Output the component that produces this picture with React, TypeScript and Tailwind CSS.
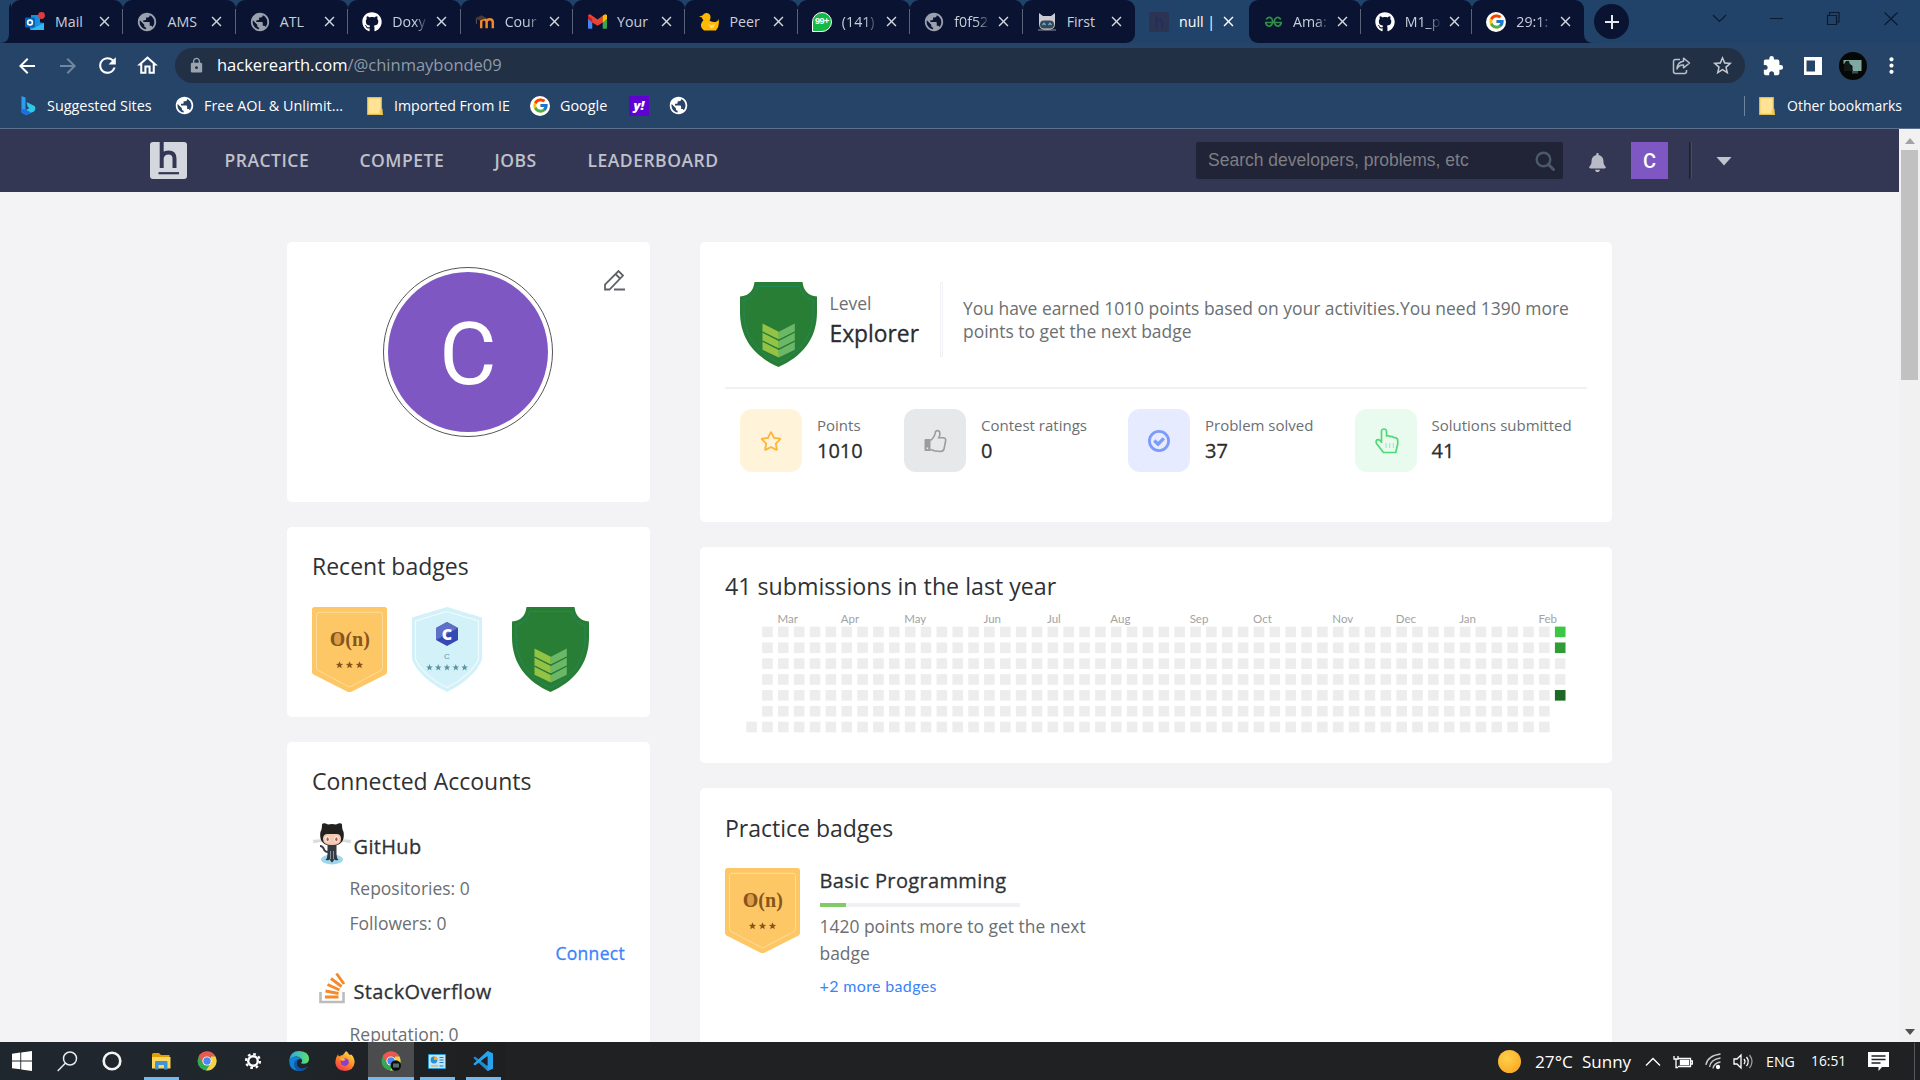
import type { ReactNode } from "react";
import { FcGoogle } from "react-icons/fc";
import { FaGithub, FaRegStar, FaBell } from "react-icons/fa";
import { MdPublic, MdClose, MdArrowBack, MdArrowForward, MdRefresh, MdOutlineHome, MdLock, MdStarBorder, MdExtension, MdMoreVert, MdAdd } from "react-icons/md";

/* ---------- favicons ---------- */

function Outlook() {
  return (
    <svg width="20" height="20" viewBox="0 0 20 20">
      <path d="M6 3h9v9H6z" fill="#1490df" />
      <path d="M5 9l14 2v7H5z" fill="#1a8fe0" />
      <path d="M5 18l14-7v7z" fill="#35b8f1" />
      <rect x="0" y="5.500" width="10" height="10" rx="1" fill="#0364b8" />
      <circle cx="5" cy="10.500" r="2.400" fill="none" stroke="#fff" strokeWidth="1.600" />
      <circle cx="16.500" cy="3.500" r="3.400" fill="#e03a3a" />
    </svg>
  );
}

function Moodle() {
  return (
    <svg width="21" height="20" viewBox="0 0 21 20">
      <path d="M6.500 16.500V10q0-3 2.800-3t2.900 3v6.500M12.200 16.500V10q0-3 3.200-3t3.300 3v6.500" fill="none" stroke="#f0872a" strokeWidth="2.600" />
      <path d="M0 6l7-3 5 3-7 2.500z" fill="#4a3a33" />
      <path d="M1.500 7v5" stroke="#6b5a4a" strokeWidth="1" />
    </svg>
  );
}

function Gmail() {
  return (
    <svg width="19" height="19" viewBox="0 0 20 20">
      <path d="M0 5v11.500q0 1 1 1h3.500V8z" fill="#4285f4" />
      <path d="M20 5v11.500q0 1-1 1h-3.500V8z" fill="#34a853" />
      <path d="M15.500 4.500L20 3.500V7l-4.500 4z" fill="#fbbc04" />
      <path d="M0 7V4q.5-2.500 3-1.200L10 8l5.500-4V11L10 14.500 4.500 11z" fill="#ea4335" />
      <path d="M15.500 4l1.500-1.200q2.500-1.300 3 1.200v3l-4.500 3.500z" fill="#fbbc04" />
      <path d="M0 7V4l4.500 3v4z" fill="#c5221f" />
    </svg>
  );
}

function Duck() {
  return (
    <svg width="20" height="20" viewBox="0 0 20 20">
      <path d="M0 4.500L3.500 3.500Q5 .5 8 1q3.500.8 3.500 4 0 2-1 3.500 3 2 6 1.500 2.500-.5 3-3 1.500 7-2.500 11.500H5Q.5 15 2.500 11q1-2 2-3Q3 7 3 5.500z" fill="#ffb900" />
      <path d="M9 12q3 2 7 0-1 4-4 4.500z" fill="#ffd978" />
    </svg>
  );
}

function WhatsApp() {
  return (
    <span className="grid h-5 w-5 place-items-center rounded-full rounded-bl-[3px] border border-white bg-[#13b944] font-['Liberation_Sans'] text-[9px] font-bold tracking-[-0.5px] text-white">99+</span>
  );
}

function CatBot() {
  return (
    <svg width="20" height="20" viewBox="0 0 20 20">
      <path d="M2 1l4 3h8l4-3v11q0 6-8 6t-8-6z" fill="#c8ccd2" />
      <rect x="3" y="8.500" width="14" height="8" rx="4" fill="#3b4653" />
      <path d="M5.500 13l1.500-1.800L8.500 13M11.500 13l1.500-1.800 1.500 1.800" fill="none" stroke="#59b7ea" strokeWidth="1.200" />
      <path d="M1 18h18" stroke="#8e949c" strokeWidth="1" />
    </svg>
  );
}

function GeeksIcon() {
  return (
    <svg width="19" height="12" viewBox="0 0 19 12">
      <path d="M1 6.500h17M2.200 3.500Q5-.5 8 3q1.500 3.500-.5 6Q4 12 1.500 7M16.800 3.500Q14-.5 11 3q-1.500 3.500.5 6 3.500 3 6-2" fill="none" stroke="#2f8d46" strokeWidth="1.700" />
    </svg>
  );
}

function HackerTabIcon() {
  return <span className="grid h-5 w-5 place-items-center rounded-[2px] bg-[#2c3454] font-['Roboto'] text-[17px] leading-5 text-[#1d2f5c]">h</span>;
}

const globe = <MdPublic size={22} color="#9aa1ad" className="-m-px" />;

type TabData = { icon: ReactNode; title: string; fade?: boolean };
const leftTabs: TabData[] = [
  { icon: <Outlook />, title: "Mail" },
  { icon: globe, title: "AMS" },
  { icon: globe, title: "ATL" },
  { icon: <FaGithub size={20} color="#fff" />, title: "Doxy", fade: true },
  { icon: <Moodle />, title: "Cour", fade: true },
  { icon: <Gmail />, title: "Your" },
  { icon: <Duck />, title: "Peer" },
  { icon: <WhatsApp />, title: "(141)", fade: true },
  { icon: globe, title: "f0f52", fade: true },
  { icon: <CatBot />, title: "First" },
];
const rightTabs: TabData[] = [
  { icon: <GeeksIcon />, title: "Ama:", fade: true },
  { icon: <FaGithub size={20} color="#fff" />, title: "M1_p", fade: true },
  { icon: <FcGoogle size={17} />, title: "29:1:", fade: true },
];

function Tab({ tab, last, active }: { tab: TabData; last?: boolean; active?: boolean }) {
  const isGoogle = tab.title === "29:1:";
  return (
    <div className={`flex h-[43px] min-w-0 flex-1 items-center rounded-t-[9px] pl-[14px] ${active ? "text-white" : "bg-[#0a1432] text-[#c9cedb]"}`}>
      <div className={`flex h-5 w-5 shrink-0 items-center justify-center ${isGoogle ? "rounded-full bg-white" : ""}`}>{tab.icon}</div>
      <div className={`ml-[10px] w-[38px] shrink-0 text-[14.200px] leading-5 whitespace-nowrap ${tab.fade ? "[mask-image:linear-gradient(to_right,black_60%,rgba(0,0,0,0.15)_90%)]" : ""}`}>{tab.title}</div>
      <MdClose size={17} className="ml-[3px] shrink-0" color={active ? "#fff" : "#d5d8df"} />
      {!last && <div className="ml-auto h-[25px] w-px shrink-0 bg-[#5a6478]" />}
    </div>
  );
}

function TabStrip() {
  return (
    <div className="flex h-[43px] shrink-0 bg-[#21436a]">
      <svg width="11" height="43" className="shrink-0">
        <path d="M0 43q9 0 9-9V9q0-4 2-6V43z" fill="#0a1432" />
      </svg>
      <div className="flex w-[1124px] shrink-0 overflow-hidden rounded-br-[9px]">
        {leftTabs.map((t, i) => <Tab key={t.title} tab={t} last={i === 9} />)}
      </div>
      <div className="flex w-[114px] shrink-0">
        <Tab tab={{ icon: <HackerTabIcon />, title: "null |" }} last active />
      </div>
      <div className="flex w-[335px] shrink-0 overflow-hidden rounded-bl-[9px]">
        {rightTabs.map((t, i) => <Tab key={t.title} tab={t} last={i === 2} />)}
      </div>
      <svg width="10" height="43" className="shrink-0">
        <path d="M0 43V6v28q0 9 10 9z" fill="#0a1432" />
      </svg>
      <div className="mt-1 flex h-[35px] w-[35px] shrink-0 items-center justify-center rounded-full bg-[#0a1432]">
        <MdAdd size={24} color="#e6e8ee" />
      </div>
      <svg width="220" height="43" className="ml-auto shrink-0" fill="none" stroke="#0b1a2e" strokeWidth="1.200">
        <path d="M13 15l6.500 6.500L26 15M70 18.500h13M127.500 15.500h9v9h-9zM129.500 15.500v-3h9.500v9.500h-2.500M184.500 12.500l13 12.500M197.500 12.500l-13 12.500" />
      </svg>
    </div>
  );
}

function Toolbar() {
  return (
    <div className="flex h-[45px] shrink-0 items-center bg-[#264368] pl-[15px] text-white">
      <MdArrowBack size={24} />
      <MdArrowForward size={24} className="ml-[17px]" color="#7286a0" />
      <MdRefresh size={25} className="ml-[15px]" />
      <MdOutlineHome size={25} className="ml-[15px]" />
      <div className="ml-[15px] flex h-[35px] w-[1570px] items-center rounded-full bg-[#213045] pl-[13px] text-[16.500px]">
        <MdLock size={17} color="#9ba3ae" />
        <span className="ml-[12px]">hackerearth.com<span className="text-[#909ba8]">/@chinmaybonde09</span></span>
        <svg width="19" height="18" viewBox="0 0 19 18" fill="none" stroke="#b9bfc9" strokeWidth="1.500" className="ml-auto">
          <path d="M8 2.500H3.500Q1.500 2.500 1.500 4.500v10q0 2 2 2h9q2 0 2-2V13" />
          <path d="M11.500 1.200L17.500 6l-6 4.800V8Q7 7.500 5 12q.3-7 6.500-7.800z" strokeLinejoin="round" />
        </svg>
        <MdStarBorder size={23} color="#c3c8d0" className="mr-[11px] ml-[20px]" />
      </div>
      <MdExtension size={22} className="ml-[17px]" />
      <svg width="18" height="18" className="ml-[20px]"><path d="M0 0h18v18H0zM2.500 3.500v11h8.500v-11z" fill="#fff" fillRule="evenodd" /></svg>
      <svg width="28" height="28" className="ml-[17px]">
        <circle cx="14" cy="14" r="14" fill="#050807" />
        <path d="M4.500 8h18v11h-9v-5l-4-3-5 1z" fill="#7fa8a0" />
        <path d="M5 12l2-3h3l1 4 3 6H5z" fill="#111a19" />
        <path d="M13 19h6v2.500h-6z" fill="#35504c" />
      </svg>
      <MdMoreVert size={25} className="ml-[12px]" />
    </div>
  );
}

function Folder() {
  return (
    <svg width="16" height="18" viewBox="0 0 16 18">
      <path d="M.7.700h13.600v12l1 4.600H.7z" fill="#ffe394" stroke="#e3bd4b" strokeWidth="1.200" />
      <path d="M12.500 17.500v-4l3-2v6z" fill="#f2c94c" />
    </svg>
  );
}

function Bookmarks() {
  return (
    <div className="flex h-[41px] shrink-0 items-center border-b border-[#5a708c] bg-[#264368] pb-[5px] pl-5 text-[14.400px] whitespace-nowrap text-white">
      <svg width="16" height="19" viewBox="0 0 16 19" className="mr-[11px]">
        <path d="M1.500 0l4 1.500V14l-4 2.500z" fill="#2a9df4" />
        <path d="M6.500 6l8 4q2 3-.5 5.500L6 19l-4.500-2.500 8-4.500-1.800-1z" fill="#30c8e8" />
        <path d="M1.500 13v3.500L6 19l5-2.500-5.500-3z" fill="#1b6fe0" />
      </svg>
      <span className="w-[128px]">Suggested Sites</span>
      <MdPublic size={21} className="-ml-px" />
      <span className="ml-[9px] w-[163px]">Free AOL &amp; Unlimit...</span>
      <Folder />
      <span className="ml-[11px] w-[136px] text-[14.200px]">Imported From IE</span>
      <div className="flex h-5 w-5 items-center justify-center rounded-full bg-white"><FcGoogle size={17} /></div>
      <span className="ml-[10px] w-[69px]">Google</span>
      <div className="grid h-5 w-5 place-items-center bg-[#5f01d1] text-[13px] font-extrabold italic">y!</div>
      <MdPublic size={21} className="ml-[19px]" />
      <div className="ml-auto h-5 w-px bg-[#6f839c]" />
      <div className="ml-[14px]"><Folder /></div>
      <span className="mr-[18px] ml-[12px] text-[14px]">Other bookmarks</span>
    </div>
  );
}

/* ---------- site header ---------- */

function SiteHeader() {
  return (
    <div className="flex h-[63px] shrink-0 items-center bg-[#343754] pl-[150px] text-[17.500px] font-semibold tracking-[0.500px] text-[#bfc1cb]">
      <svg width="37" height="37" viewBox="0 0 37 37">
        <rect width="37" height="37" rx="3" fill="#d5d7de" />
        <path d="M11.700 0v26M11.700 16q1-5.500 6.800-5.500 6 0 6 6V26" fill="none" stroke="#343754" strokeWidth="4" />
        <path d="M8.500 31.200h20.500" stroke="#343754" strokeWidth="2.200" />
      </svg>
      <span className="ml-[37.500px] w-[135px]">PRACTICE</span>
      <span className="w-[135px]">COMPETE</span>
      <span className="w-[93px]">JOBS</span>
      <span>LEADERBOARD</span>
      <div className="ml-auto flex h-[37px] w-[367px] items-center rounded-[2px] bg-[#212336] pr-[8px] pl-[12px] font-['Liberation_Sans'] text-[17.500px] font-normal tracking-normal text-[#7d7f86]">
        Search developers, problems, etc
        <svg width="20" height="20" viewBox="0 0 20 20" className="ml-auto" fill="none" stroke="#4a5a68" strokeWidth="2.400">
          <circle cx="8.500" cy="8.500" r="6.800" />
          <path d="M13.500 13.500l5 5" strokeWidth="3" strokeLinecap="round" />
        </svg>
      </div>
      <FaBell size={19} className="mt-1 ml-[25px]" color="#b9bbc6" />
      <div className="ml-[24px] grid h-[37px] w-[37px] place-items-center bg-[#7e57c2] font-['Roboto'] text-[20px] font-medium tracking-normal text-white">C</div>
      <div className="ml-[21px] h-[37px] w-[3px] border-r border-l border-r-[#4c4c50] border-l-[#20212c] bg-[#2b2c3c]" />
      <svg width="16" height="10" className="mr-[167px] ml-[24px]"><path d="M.5 1h15L8 9.500z" fill="#c3c5ce" /></svg>
    </div>
  );
}

/* ---------- badges ---------- */

const STAR = "M0-3.800L1-1.200 3.700-1.100 1.600.600 2.300 3.200 0 1.700-2.300 3.200-1.600.600-3.700-1.100-1-1.200z";

function ShieldBadge() {
  return (
    <svg width="77" height="85" viewBox="0 0 77 85" className="shrink-0">
      <path d="M14.500 0h48Q64 13.500 77 14.500V30C77 58 61 75 38.500 85 16 75 0 58 0 30V14.500Q13 13.500 14.500 0z" fill="#287e35" />
      <path d="M17.500 4.500h42Q61.500 15.500 73 18V31C72.500 56 58 71.500 38.500 80.500 19 71.500 4.500 56 4 31V18Q15.500 15.500 17.500 4.500z" fill="none" stroke="#24885a" strokeWidth="1" />
      {[0, 9, 18].map((y) => (
        <g key={y} transform={`translate(0 ${y})`}>
          <path d="M22.500 41.500l16.300 8.300v7.700L22.500 49.700z" fill="#93c245" />
          <path d="M54.800 41.500l-16 8.300v7.700l16-7.800z" fill="#6bb767" />
        </g>
      ))}
      <path d="M22.500 50l16.300 8.300 16-8.300M22.500 59l16.300 8.300 16-8.300" fill="none" stroke="#287e35" strokeWidth="1.400" />
    </svg>
  );
}

function OrderNBadge() {
  return (
    <svg width="75" height="85" viewBox="0 0 75 85" className="shrink-0">
      <path d="M2.500 0h70Q75 0 75 2.500V65q0 1.800-1.500 2.600L40 84.400q-2.500 1.200-5 0L1.500 67.600Q0 66.800 0 65V2.500Q0 0 2.500 0z" fill="#fec766" />
      <path d="M7 5.300h61q2.500 0 2.500 2.500v53q0 1.800-1.500 2.600L38.500 79.600h-2L6 63.400q-1.500-.8-1.500-2.600v-53Q4.500 5.300 7 5.300z" fill="none" stroke="#ffdb9b" strokeWidth="1" />
      <ellipse cx="25.500" cy="32" rx="5.500" ry="6.500" fill="#dd9d46" />
      <text x="37.800" y="38.500" textAnchor="middle" fill="#87551b" className="font-['Liberation_Serif'] text-[20px] font-bold">O(n)</text>
      {[27.500, 37.500, 47.500].map((x) => <path key={x} d={STAR} transform={`translate(${x} 58)`} fill="#87551b" />)}
    </svg>
  );
}

function CBadge() {
  return (
    <svg width="70" height="85" viewBox="0 0 70 85" className="shrink-0">
      <path d="M35 0l35 10.500V52C66 65 50 78 35 85 20 78 4 65 0 52V10.500z" fill="#d3f1f9" />
      <path d="M35 4.500l31.500 9.500v38C62 63 48 74.500 35 80.500 22 74.500 8 63 3.500 52V14z" fill="none" stroke="#f0fbfe" strokeWidth="1.200" />
      <path d="M35 15l11 6v12l-11 6-11-6V21z" fill="#3548b3" />
      <path d="M35 15l11 6-22 12V21z" fill="#5e70c8" />
      <text x="35" y="32.500" textAnchor="middle" fill="#fff" className="font-['Open_Sans'] text-[16px] font-extrabold">C</text>
      <text x="35" y="51.500" textAnchor="middle" fill="#5b98a3" className="font-['Liberation_Sans'] text-[8px]">C</text>
      {[17.500, 26.300, 35, 43.800, 52.600].map((x) => <path key={x} d={STAR} transform={`translate(${x} 60.500) scale(.9)`} fill="#5b939d" />)}
    </svg>
  );
}

/* ---------- left column ---------- */

const cardHeading = "text-[23px] leading-[30px] font-medium text-[#2f3235]";
const itemTitle = "text-[20px] leading-[30px] font-medium tracking-[0.350px] text-[#2f3235] [-webkit-text-stroke:0.3px_#2f3235]";

function Octocat() {
  return (
    <svg width="40" height="43" viewBox="0 0 40 43" className="shrink-0">
      <ellipse cx="20" cy="37.500" rx="11" ry="5" fill="#9dd7ee" />
      <path d="M1 18.500l9-.5M1 20.500l9-1.500M39 18.500l-9-.5M39 20.500l-9-1.500" stroke="#d8dadd" strokeWidth="1.300" />
      <path d="M10 2.500Q11 0 16 2.500q4-1 8 0Q29 0 30 2.500q0 3 .5 5Q33 12 31 18q-2 5.500-11 5.500T9 18Q7 12 9.500 7.500q.5-2 .5-5z" fill="#23211f" />
      <path d="M11 17q0-5 4.500-5h9q4.500 0 4.500 5 0 6-9 6t-9-6z" fill="#f4cbb2" />
      <ellipse cx="15.500" cy="17" rx="2" ry="2.800" fill="#fff" /><ellipse cx="24.500" cy="17" rx="2" ry="2.800" fill="#fff" />
      <ellipse cx="15.600" cy="17.200" rx="1.200" ry="2" fill="#ad5c51" /><ellipse cx="24.400" cy="17.200" rx="1.200" ry="2" fill="#ad5c51" />
      <path d="M8 24q3 0 4.500 4.500 1 1.500 4 1.500" fill="none" stroke="#3b3f45" strokeWidth="2" />
      <path d="M15.500 23h9v9q0 4 2 6-4 1-4.500-1 0 3-2 3.500-2-.5-2-3.500-.5 2-4.500 1 2-2 2-6z" fill="#34393f" />
      <path d="M18.500 29v8M21.500 29v8" stroke="#a9bdc8" strokeWidth=".7" />
    </svg>
  );
}

function StackOverflowIcon() {
  return (
    <svg width="27" height="32" viewBox="0 0 27 32" fill="none" className="shrink-0">
      <path d="M1.500 20v10h23V20" stroke="#bcbcbc" strokeWidth="2.600" />
      <path d="M6 25h13.500M6.500 19l13 2.500M8.500 12.500l12 5.500M12 6.500l10.500 8M17.500 1.500l7.500 10.500" stroke="#f48a2c" strokeWidth="2.900" />
    </svg>
  );
}

function LeftColumn() {
  return (
    <div className="flex w-[363px] shrink-0 flex-col gap-[25px]">
      <section className="relative h-[260px] rounded-[5px] bg-white pt-[25px]">
        <div className="ml-[96px] h-[170px] w-[170px] rounded-full border border-[#555] p-[4px]">
          <div className="grid h-full w-full place-items-center rounded-full bg-[#7e57c2] pt-[3px] font-['Roboto'] text-[88px] leading-none text-white">C</div>
        </div>
        <svg width="21" height="21" viewBox="0 0 21 21" fill="none" stroke="#5f6368" strokeWidth="1.800" className="absolute top-[28px] right-[25px]">
          <path d="M1 19.500V14.500L14.500 1 19 5.500 5.500 19.500zM11.500 4l4.500 4.500M10 19.500h11" />
        </svg>
      </section>

      <section className="h-[190px] rounded-[5px] bg-white px-[25px] pt-6">
        <h2 className={cardHeading}>Recent badges</h2>
        <div className="mt-[26px] flex">
          <div className="w-[100px]"><OrderNBadge /></div>
          <div className="w-[100px]"><CBadge /></div>
          <ShieldBadge />
        </div>
      </section>

      <section className="h-[460px] rounded-[5px] bg-white px-[25px] pt-6 text-[17.500px] text-[#6b6f72]">
        <h2 className={cardHeading}>Connected Accounts</h2>
        <div className="mt-[26px] flex h-[43px]">
          <Octocat />
          <h3 className={`mt-[10px] ml-[1.500px] ${itemTitle}`}>GitHub</h3>
        </div>
        <div className="mt-[6px] ml-[37.500px] leading-[35px]">
          <p>Repositories: 0</p>
          <p>Followers: 0</p>
        </div>
        <p className="text-right leading-[25px] font-medium tracking-[0.300px] text-[#3b82fb] [-webkit-text-stroke:0.3px_#3b82fb]">Connect</p>
        <div className="mt-[6px] ml-[7px] flex h-8">
          <StackOverflowIcon />
          <h3 className={`mt-[5px] ml-[7.500px] ${itemTitle}`}>StackOverflow</h3>
        </div>
        <p className="mt-[13px] ml-[37.500px] leading-[35px]">Reputation: 0</p>
      </section>
    </div>
  );
}

/* ---------- right column ---------- */

function Stat({ box, icon, label, value }: { box: string; icon: ReactNode; label: string; value: string }) {
  return (
    <div className={`flex shrink-0 ${box}`}>
      <div className="stat grid h-[63px] w-[62px] place-items-center rounded-[12px]">{icon}</div>
      <div className="ml-[15px] whitespace-nowrap">
        <div className="mt-[6px] text-[15px] leading-5 text-[#6b6f72]">{label}</div>
        <div className="mt-[1px] text-[20px] leading-[30px] font-medium text-[#2a2c2e] [-webkit-text-stroke:0.3px_#2a2c2e]">{value}</div>
      </div>
    </div>
  );
}

const months: [string, number][] = [["Mar", 2], ["Apr", 6], ["May", 10], ["Jun", 15], ["Jul", 19], ["Aug", 23], ["Sep", 28], ["Oct", 32], ["Nov", 37], ["Dec", 41], ["Jan", 45], ["Feb", 50]];
const PITCH = 15.855;
const hot: Record<number, string> = { 0: "#3bc643", 1: "#2f9c35", 4: "#1d6823" };

function Heatmap() {
  const cells: ReactNode[] = [];
  for (let c = 0; c < 52; c++)
    for (let r = 0; r < 7; r++) {
      if (c === 0 && r < 6) continue;
      if (c === 51 && r > 4) continue;
      cells.push(<rect key={`${c}-${r}`} x={c * PITCH + 0.3} y={r * PITCH + 15.6} width="10.6" height="10.6" fill={(c === 51 && hot[r]) || "#ededed"} />);
    }
  return (
    <svg width="830" height="124" className="ml-[21px] block">
      {months.map(([m, c]) => <text key={m} x={c * PITCH - 0.3} y="12.300" fill="#a3a3a3" className="font-['Lato'] text-[11.500px]">{m}</text>)}
      {cells}
    </svg>
  );
}

function RightColumn() {
  return (
    <div className="flex w-[912px] shrink-0 flex-col gap-[25px]">
      <section className="h-[280px] rounded-[5px] bg-white px-[25px] pt-10">
        <div className="flex h-[107px] border-b-2 border-[#f0f0f5] pl-[15px]">
          <ShieldBadge />
          <div className="ml-[12.500px] w-[110.500px]">
            <div className="mt-[9px] text-[17.500px] leading-[25px] text-[#6b6f72]">Level</div>
            <div className="mt-[3px] text-[22.800px] leading-[30px] font-medium text-[#2a2c2e] [-webkit-text-stroke:0.3px_#2a2c2e]">Explorer</div>
          </div>
          <div className="h-[75px] w-[3px] border border-[#f0f0f6]" />
          <p className="mt-[15px] ml-[20px] text-[17.450px] leading-[23px] whitespace-nowrap text-[#6b6f72]">
            You have earned 1010 points based on your activities.You need 1390 more
            <br />
            points to get the next badge
          </p>
        </div>
        <div className="mt-[20px] flex pl-[15px]">
          <Stat box="w-[164px] [&_.stat]:bg-[#fff4d9]" label="Points" value="1010" icon={<FaRegStar size={22} color="#fdb53a" />} />
          <Stat
            box="w-[224px] [&_.stat]:bg-[#e7e8ea]"
            label="Contest ratings"
            value="0"
            icon={
              <svg width="23" height="24" viewBox="0 0 23 24">
                <path d="M1.500 10H6.500V22H1.500Q.5 22 .5 21V11Q.5 10 1.500 10z" fill="#9b9c9e" />
                <path d="M6.500 11.500Q11 8 11.500 2.500 14 .500 15.700 3 16.500 5.500 14.700 8.800H19.500Q22.200 9.200 21.600 12L20 20Q19.500 22.300 16.500 22.500 10.500 22.500 6.500 20.500" fill="none" stroke="#9b9c9e" strokeWidth="1.600" />
                <path d="M2.600 18.500h1.600v1.600H2.600z" fill="#e7e8ea" />
              </svg>
            }
          />
          <Stat
            box="w-[226.500px] [&_.stat]:bg-[#e6ebff]"
            label="Problem solved"
            value="37"
            icon={
              <svg width="22" height="22" viewBox="0 0 22 22" fill="none" stroke="#7d9bfd">
                <circle cx="11" cy="11" r="9.600" strokeWidth="2.800" />
                <path d="M6.300 10.500l3.700 3.700 5.800-5.800" strokeWidth="3.400" />
              </svg>
            }
          />
          <Stat
            box="[&_.stat]:bg-[#e9fbef]"
            label="Solutions submitted"
            value="41"
            icon={
              <svg width="24" height="26" viewBox="0 0 24 26" fill="none" stroke="#4fd873" strokeWidth="1.700" strokeLinejoin="round" className="ml-[2px]">
                <path d="M6.500 15V3.200Q6.800 1 9 1t2.500 2.200V8q2.400-1 3.700.8 2.300-1 3.300.8 3.500-.6 4.200 2.200V16l-2 8.500H8.500L1.500 15.500Q.3 12 2.800 11.600 4.800 11.400 6.500 14" />
                <path d="M11 15v5M14.700 15v5M18.400 15v5" stroke="#a8ebba" strokeWidth="1.200" />
              </svg>
            }
          />
        </div>
      </section>

      <section className="h-[216px] rounded-[5px] bg-white px-[25px] pt-6">
        <h2 className="text-[23.200px] leading-[30px] text-[#2f3235]">41 submissions in the last year</h2>
        <div className="mt-[10px]"><Heatmap /></div>
      </section>

      <section className="h-[420px] rounded-[5px] bg-white px-[25px] pt-[25px]">
        <h2 className={cardHeading}>Practice badges</h2>
        <div className="mt-[25px] flex">
          <OrderNBadge />
          <div className="ml-[19.500px] w-[290px]">
            <h3 className={`mt-[-2px] ${itemTitle}`}>Basic Programming</h3>
            <div className="mt-[7px] h-1 w-[200px] bg-[#f0f1f4]"><div className="h-full w-[26px] bg-[#80ca68]" /></div>
            <p className="mt-[6px] text-[17.450px] leading-[27px] text-[#6b6f72]">1420 points more to get the next badge</p>
            <p className="mt-[7px] font-['Lato'] text-[16px] leading-[24px] tracking-[0.350px] text-[#3b82fb]">+2 more badges</p>
          </div>
        </div>
      </section>
    </div>
  );
}

/* ---------- taskbar ---------- */

function Chrome({ badge }: { badge?: boolean }) {
  return (
    <svg width="20" height="20" viewBox="0 0 20 20">
      <circle cx="10" cy="10" r="9.500" fill="#34a853" />
      <path d="M10 10L1.800 5.200A9.500 9.500 0 0 1 18.500 5.600L10 5.700z" fill="#e8453c" />
      <path d="M1.800 5.200A9.500 9.500 0 0 1 18.500 5.600H10L6 12z" fill="#e8594f" />
      <path d="M18.400 5.600A9.500 9.500 0 0 1 9 19.450L14 12V5.600z" fill="#fdd043" />
      <circle cx="10" cy="10" r="4.600" fill="#fff" />
      <circle cx="10" cy="10" r="3.700" fill="#4a87f2" />
      {badge && <><circle cx="14.800" cy="14.500" r="5.200" fill="#0a0d0c" /><path d="M12 12.500h6v4h-6z" fill="#55706c" /></>}
    </svg>
  );
}

function Slot({ children, open, active }: { children: ReactNode; open?: boolean; active?: boolean }) {
  return (
    <div className={`flex h-full w-[46px] shrink-0 flex-col items-center ${active ? "bg-[#4a4c4e]" : ""}`}>
      <div className="flex h-[35px] items-center pt-[3px]">{children}</div>
      {open && <div className={`h-[3px] bg-[#76b9ed] ${active ? "w-full" : "w-[35px]"}`} />}
    </div>
  );
}

function Taskbar() {
  return (
    <div className="flex h-[38px] shrink-0 items-center bg-[#1f2123] text-white">
      <div className="flex h-full w-[506px] shrink-0 bg-[linear-gradient(90deg,#1f272e,#20262c_50%,#1e1f20)]">
        <Slot>
          <svg width="20" height="20" viewBox="0 0 20 20" fill="#fff" className="-ml-[2px]"><path d="M0 2.800l8.300-1.200v7.900H0zM9.200 1.500L20 0v9.500H9.200zM0 10.400h8.300v7.900L0 17.200zM9.200 10.400H20V20L9.200 18.400z" /></svg>
        </Slot>
        <Slot>
          <svg width="21" height="21" viewBox="0 0 21 21" fill="none" stroke="#e8eaec" strokeWidth="1.500" className="-ml-1"><circle cx="13" cy="7.500" r="6.500" /><path d="M8.300 12.300L.7 20" /></svg>
        </Slot>
        <Slot>
          <svg width="20" height="20" viewBox="0 0 20 20" fill="none" stroke="#f4f4f4" strokeWidth="2.600" className="-ml-[6px]"><circle cx="10" cy="10" r="8.300" /></svg>
        </Slot>
        <Slot open>
          <svg width="19" height="17" viewBox="0 0 19 17"><path d="M0 1.500Q0 0 1.500 0H7l2 2h8.500v13H0z" fill="#e0a100" /><path d="M0 4h18.500v11.500H0z" fill="#ffd65c" /><path d="M3 16.500V9q0-1 1-1h10.500q1 0 1 1v7.500H12V12H6.500v4.500z" fill="#3c95da" /></svg>
        </Slot>
        <Slot><Chrome /></Slot>
        <Slot>
          <svg width="18" height="18" viewBox="0 0 18 18" fill="none" stroke="#fff"><circle cx="9" cy="9" r="4.800" strokeWidth="2.400" /><circle cx="9" cy="9" r="7" strokeWidth="2.200" strokeDasharray="2.700 2.798" /></svg>
        </Slot>
        <Slot>
          <svg width="20" height="20" viewBox="0 0 20 20">
            <defs>
              <linearGradient id="edgeTop" x1="0" x2="1"><stop offset="0" stopColor="#2aa8e8" /><stop offset="1" stopColor="#5fe06a" /></linearGradient>
            </defs>
            <path d="M.2 9.500Q1 0 10.300 0 20 .5 20 8q0 4.500-5.500 4.800Q12 12.800 12 12q1.500-1 1-3Q11.500 5.500 7 5.500q-5 .5-6.800 4z" fill="url(#edgeTop)" />
            <path d="M.2 9.500Q2 5.500 7 5.500q3.500 0 5.500 2.500Q8 7.500 7.500 12q0 5 5.500 6.500-2 1.500-4 1.400Q0 19 .2 9.500z" fill="#1183d6" />
            <path d="M7.300 12q0 4 4.500 5.300 4 .5 7-2.300-3.500 6-9.800 5Q4 17 5.500 11 6.500 8.500 9 8 7.300 9.500 7.300 12z" fill="#0d55a8" />
          </svg>
        </Slot>
        <Slot>
          <svg width="20" height="20" viewBox="0 0 20 20">
            <defs>
              <linearGradient id="fox" x1=".8" y1="0" x2=".2" y2="1"><stop offset="0" stopColor="#ffe34a" /><stop offset=".5" stopColor="#ff8a25" /><stop offset="1" stopColor="#f0304f" /></linearGradient>
            </defs>
            <path d="M11 0q2 1 3 3.500Q16 4 16.300 3.500 20 7 19.500 12q-1 7.500-9.500 8Q1 19.500.3 11.500.2 7 3.200 3q0 2 .8 2.500Q6 4 7.500 4.200 9.500 2.500 11 0z" fill="url(#fox)" />
            <path d="M6 8.500q3-2.500 7 0 2 3.500-.8 5.800Q9 16 6.500 13.500 5 11 6 8.500z" fill="#8a3fd0" />
            <path d="M4.500 7q3-1.500 6 1.500-1 1.500-3.500 1.500z" fill="#ffb02e" />
          </svg>
        </Slot>
        <Slot open active><Chrome badge /></Slot>
        <Slot open>
          <svg width="18" height="15" viewBox="0 0 18 15"><rect width="18" height="15" rx="1" fill="#2c9ad6" /><rect x="1" y="1" width="16" height="13" fill="#bfe6f9" /><circle cx="6" cy="6" r="3.400" fill="#2b8fd8" /><path d="M6 6V2.600A3.400 3.400 0 0 1 9.400 6z" fill="#f5a623" /><path d="M11.500 3.500h4M11.500 6h4M11.500 8.500h4" stroke="#2b7bb8" /><path d="M3 12h7" stroke="#e8973a" /><path d="M11.500 12h4" stroke="#2b7bb8" /></svg>
        </Slot>
        <Slot open>
          <svg width="20" height="20" viewBox="0 0 20 20"><path d="M14.500 0L20 2.500v15L14.500 20 2 8.500.3 7 2 5.500l12.500 9.500V5z" fill="#1f8ad2" /><path d="M14.500 20V15L14.500 5 2 14.500.3 13 14.500 0 20 2.500v15z" fill="#2aa3ee" /><path d="M14.500 5.500v9L8.500 10z" fill="#1f2123" /></svg>
        </Slot>
      </div>

      <div className="ml-auto flex h-full items-center pt-px">
        <div className="h-[23px] w-[23px] rounded-full bg-[radial-gradient(circle_at_40%_35%,#ffd04a,#f9a01b)]" />
        <span className="ml-[14px] w-[47px] text-[17.200px]">27°C</span>
        <span className="w-[63px] text-[17px]">Sunny</span>
        <svg width="16" height="10" fill="none" stroke="#fff" strokeWidth="1.400"><path d="M1 8.500l7-7 7 7" /></svg>
        <svg width="20" height="14" viewBox="0 0 20 14" fill="none" stroke="#fff" strokeWidth="1.300" className="ml-[12px]"><path d="M5 3.500h12.500v8H5M17.500 6h1.800v3h-1.800" /><path d="M7.500 5.500h8v4h-8z" fill="#fff" /><path d="M1 1v3h4V1M3 4v8.500h2" /></svg>
        <svg width="17" height="17" viewBox="0 0 17 17" fill="none" stroke="#c9cbcd" strokeWidth="1.300" className="ml-[12px]"><path d="M1 12Q2 3 15.500 1M4.500 14Q5.500 6.500 15.500 5M8 15.500Q9 10 15.500 9" /><circle cx="13" cy="14" r="1.500" fill="#fff" stroke="#fff" /></svg>
        <svg width="21" height="17" viewBox="0 0 21 17" fill="none" stroke="#fff" strokeWidth="1.300" className="ml-[11px]"><path d="M1 6v5h3l4 4V2L4 6zM11 6q2 2.500 0 5M13.500 4q3.500 4.500 0 9" /><path d="M16.500 2q5 6.500 0 13" stroke="#9a9c9e" /></svg>
        <span className="ml-[12px] w-[45px] text-[14.200px]">ENG</span>
        <span className="w-[58px] text-[13.800px]">16:51</span>
        <svg width="21" height="21" viewBox="0 0 21 21" className="-ml-px"><path d="M0 1h21v15h-7l-3.500 4V16H0z" fill="#fff" /><path d="M3.500 5h14M3.500 8.500h14M3.500 12h9" stroke="#1f2123" strokeWidth="1.300" /></svg>
        <div className="mr-[5px] ml-[25px] h-full w-px bg-[#55575a]" />
      </div>
    </div>
  );
}

export default function App() {
  return (
    <div className="flex h-[1080px] w-[1920px] flex-col overflow-hidden bg-[#f3f3f6] font-['Open_Sans',sans-serif]">
      <TabStrip />
      <Toolbar />
      <Bookmarks />
      <div className="flex h-[913px] shrink-0 overflow-hidden">
        <div className="flex w-[1899px] shrink-0 flex-col overflow-hidden">
          <SiteHeader />
          <div className="flex shrink-0 gap-[50px] pt-[50px] pl-[287px]">
            <LeftColumn />
            <RightColumn />
          </div>
        </div>
        <div className="flex w-[21px] flex-col items-center bg-[#f1f1f1] pt-[9px] pb-[7px]">
          <svg width="10" height="6"><path d="M0 6l5-6 5 6z" fill="#a3a3a3" /></svg>
          <div className="mt-[6px] h-[230px] w-[17px] bg-[#c1c1c1]" />
          <svg width="10" height="6" className="mt-auto"><path d="M0 0l5 6 5-6z" fill="#505050" /></svg>
        </div>
      </div>
      <Taskbar />
    </div>
  );
}
